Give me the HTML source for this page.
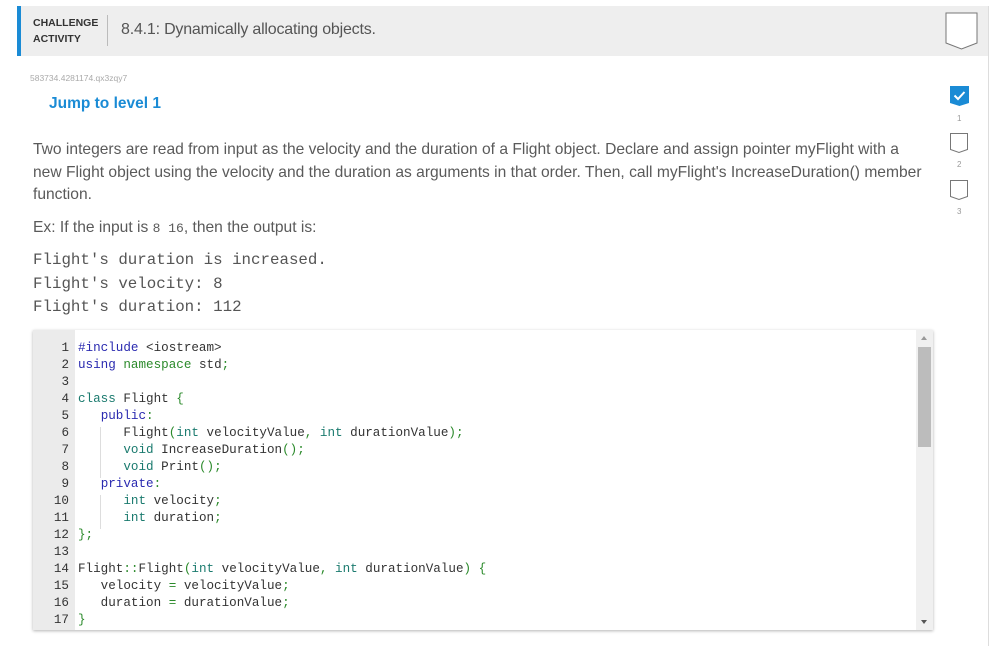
<!DOCTYPE html>
<html><head><style>
body{margin:0;width:991px;height:639px;background:#fff;overflow:hidden;font-family:"Liberation Sans",sans-serif;position:relative}
.abs{position:absolute}
.card{left:17px;top:6px;width:971px;height:640px;border-right:1px solid #ddd;}
.hdr{left:17px;top:6px;width:971px;height:50px;background:#eee}
.bar{left:17px;top:6px;width:4px;height:50px;background:#1a8bd5}
.code{font-family:"Liberation Mono",monospace;font-size:12.6px;line-height:17px;white-space:pre;color:#333}
.k{color:#2a2ab0}.t{color:#1a7a6e}.g{color:#2b8a2b}.b{color:#2a2ab0}
.desc{font-size:15.6px;color:#5a5a5a;line-height:22.5px;white-space:nowrap;letter-spacing:0}
.out{font-family:"Liberation Mono",monospace;font-size:15.8px;color:#555;white-space:pre;line-height:23.5px}
</style></head><body>
<div class="abs card"></div>
<div class="abs hdr"></div>
<div class="abs bar"></div>
<div class="abs" style="left:33px;top:15px;font-size:10.5px;font-weight:bold;color:#333;line-height:16px">CHALLENGE<br>ACTIVITY</div>
<div class="abs" style="left:107px;top:15px;width:1px;height:31px;background:#bbb"></div>
<div class="abs" style="left:121px;top:21px;font-size:16px;color:#555;letter-spacing:-0.2px">8.4.1: Dynamically allocating objects.</div>
<svg class="abs" style="left:945px;top:12px" width="34" height="39"><path d="M1 1H32V31L16.5 37L1 31Z" fill="#fff" stroke="#777" stroke-width="1"/></svg>
<div class="abs" style="left:30px;top:73px;font-size:8.5px;color:#aaa">583734.4281174.qx3zqy7</div>
<div class="abs" style="left:49px;top:95px;font-size:15.5px;font-weight:bold;color:#1a8bd5">Jump to level 1</div>
<svg class="abs" style="left:950px;top:86px" width="22" height="22"><path d="M0 0H19V17L9.5 20L0 17Z" fill="#1a8bd5"/><path d="M4.5 9.5L8 13L14.5 6" stroke="#fff" stroke-width="2" fill="none"/></svg>
<div class="abs" style="left:957px;top:114px;font-size:8px;color:#999">1</div>
<svg class="abs" style="left:950px;top:133px" width="22" height="22"><path d="M0.5 0.5H17.5V16.5L9 19.5L0.5 16.5Z" fill="#fff" stroke="#777"/></svg>
<div class="abs" style="left:957px;top:160px;font-size:8px;color:#999">2</div>
<svg class="abs" style="left:950px;top:180px" width="22" height="22"><path d="M0.5 0.5H17.5V16.5L9 19.5L0.5 16.5Z" fill="#fff" stroke="#777"/></svg>
<div class="abs" style="left:957px;top:207px;font-size:8px;color:#999">3</div>
<div class="abs desc" style="left:33px;top:139px">Two integers are read from input as the velocity and the duration of a Flight object. Declare and assign pointer myFlight with a<br>new Flight object using the velocity and the duration as arguments in that order. Then, call myFlight's IncreaseDuration() member<br>function.</div>
<div class="abs desc" style="left:33px;top:217px">Ex: If the input is <span style="font-family:'Liberation Mono',monospace;font-size:13px">8 16</span>, then the output is:</div>
<div class="abs out" style="left:33px;top:249px">Flight's duration is increased.
Flight's velocity: 8
Flight's duration: 112</div>
<div class="abs" style="left:33px;top:330px;width:900px;height:300px;background:#fff;box-shadow:0 1px 3px rgba(0,0,0,.3)"></div>
<div class="abs" style="left:33px;top:330px;width:42px;height:300px;background:#ebebeb"></div>
<div class="abs" style="left:916px;top:330px;width:17px;height:300px;background:#f0f0f0"></div>
<div class="abs" style="left:918px;top:347px;width:13px;height:100px;background:#bcbcbc"></div>
<div class="abs" style="left:921px;top:336px;width:0;height:0;border-left:3.5px solid transparent;border-right:3.5px solid transparent;border-bottom:4px solid #999"></div>
<div class="abs" style="left:921px;top:620px;width:0;height:0;border-left:3.5px solid transparent;border-right:3.5px solid transparent;border-top:4px solid #555"></div>
<div class="abs" style="left:100px;top:427px;width:1px;height:51px;background:#ddd"></div>
<div class="abs" style="left:100px;top:495px;width:1px;height:34px;background:#ddd"></div>
<div class="abs code" style="left:33px;top:340px;width:36px;text-align:right;color:#333">1
2
3
4
5
6
7
8
9
10
11
12
13
14
15
16
17</div>
<div class="abs code" style="left:78px;top:340px"><span class="k">#include</span> &lt;iostream&gt;
<span class="k">using</span> <span class="g">namespace</span> std<span class="g">;</span>

<span class="t">class</span> Flight <span class="g">{</span>
   <span class="k">public</span><span class="g">:</span>
      Flight<span class="g">(</span><span class="t">int</span> velocityValue<span class="g">,</span> <span class="t">int</span> durationValue<span class="g">);</span>
      <span class="t">void</span> IncreaseDuration<span class="g">();</span>
      <span class="t">void</span> Print<span class="g">();</span>
   <span class="k">private</span><span class="g">:</span>
      <span class="t">int</span> velocity<span class="g">;</span>
      <span class="t">int</span> duration<span class="g">;</span>
<span class="g">};</span>

Flight<span class="g">::</span>Flight<span class="g">(</span><span class="t">int</span> velocityValue<span class="g">,</span> <span class="t">int</span> durationValue<span class="g">)</span> <span class="g">{</span>
   velocity <span class="g">=</span> velocityValue<span class="g">;</span>
   duration <span class="g">=</span> durationValue<span class="g">;</span>
<span class="g">}</span></div>
</body></html>
